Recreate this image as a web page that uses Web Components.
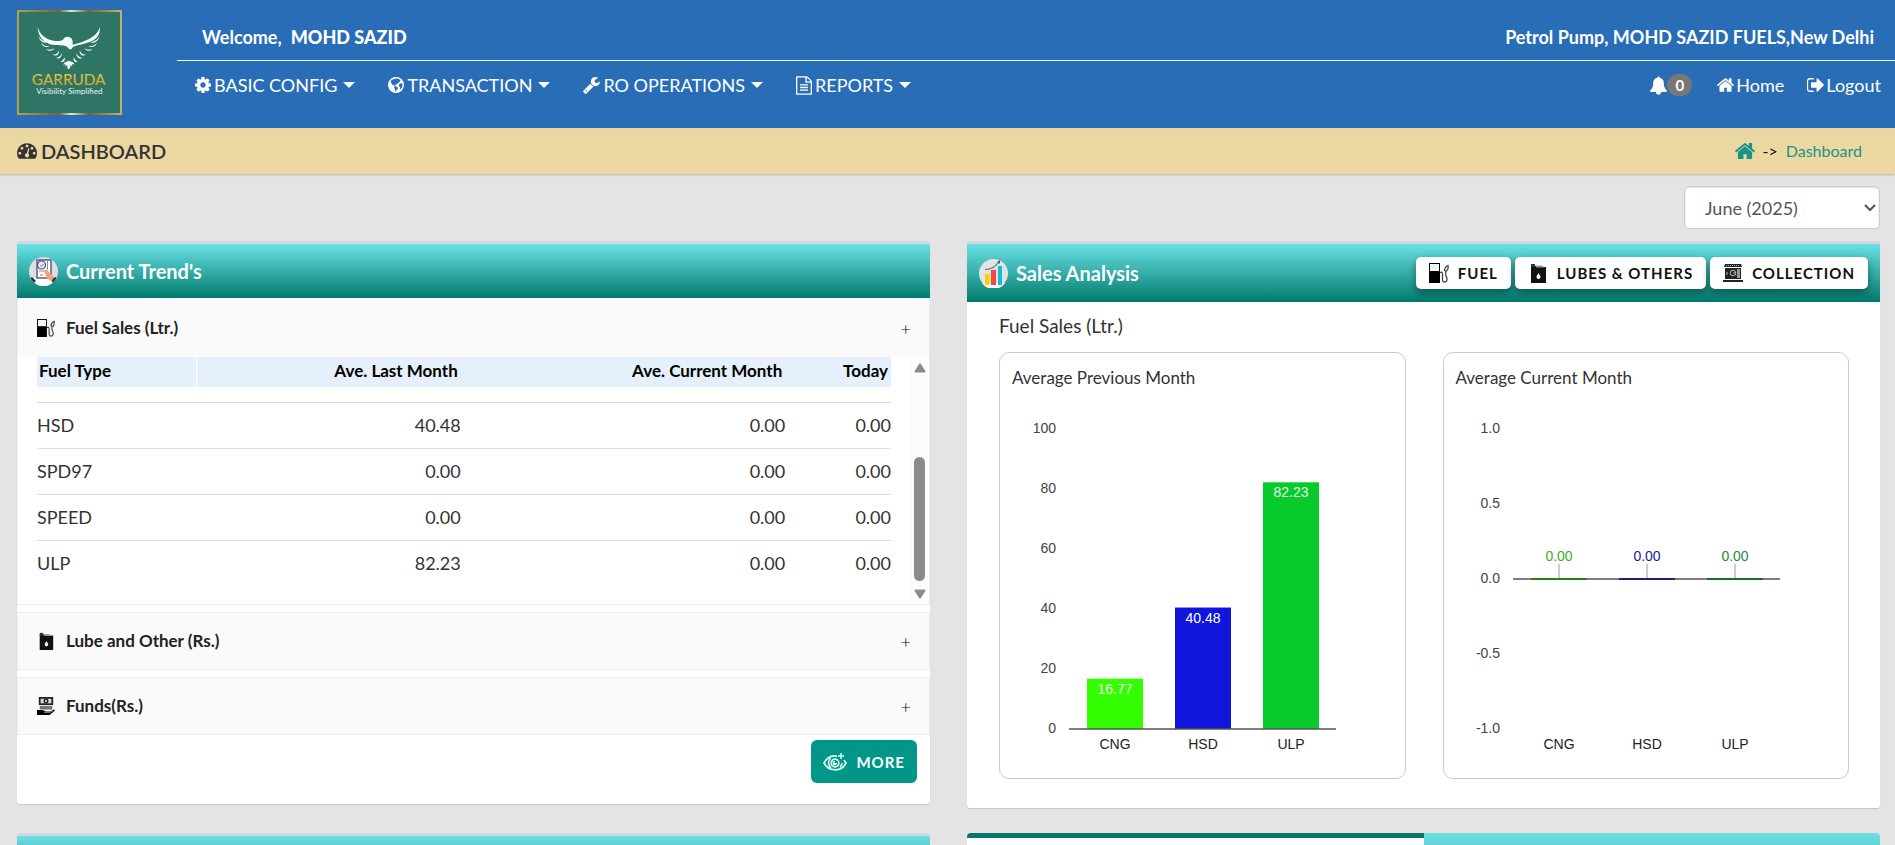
<!DOCTYPE html>
<html lang="en">
<head>
<meta charset="utf-8">
<title>Garruda Dashboard</title>
<style>
  body { margin: 0; height: 100vh; overflow: hidden; background: #e4e4e4; font-family: Lato, "Liberation Sans", sans-serif; font-size: 18px; line-height: 24px; color: #333; }
</style>
</head>
<body>
<garruda-app></garruda-app>
<script>
const define = (name, html, setup) => {
  const t = document.createElement('template');
  t.innerHTML = '<style>*{box-sizing:border-box}:host{display:block}button,select{font:inherit;color:inherit;margin:0}</style>' + html;
  customElements.define(name, class extends HTMLElement {
    connectedCallback() {
      if (this.shadowRoot) return;
      this.attachShadow({ mode: 'open' }).append(t.content.cloneNode(true));
      if (setup) setup.call(this, this.shadowRoot);
    }
  });
};

/* name: [viewBox, width, height, markup] */
const icons = {
  cog: ['128 128 1536 1536', 16, 16, '<path d="M1152 896q0-106-75-181t-181-75-181 75-75 181 75 181 181 75 181-75 75-181zm512-109v222q0 12-8 23t-20 13l-185 28q-19 54-39 91 35 50 107 138 10 12 10 25t-9 23q-27 37-99 108t-94 71q-12 0-26-9l-138-108q-44 23-91 38-16 136-29 186-7 28-36 28h-222q-14 0-24.5-8.5t-11.5-21.5l-28-184q-49-16-90-37l-141 107q-10 9-25 9-14 0-25-11-126-114-165-168-7-10-7-23 0-12 8-23 15-21 51-66.5t54-70.5q-27-50-41-99l-183-27q-13-2-21-12.5t-8-23.5v-222q0-12 8-23t19-13l186-28q14-46 39-92-40-57-107-138-10-12-10-24 0-10 9-23 26-36 98.5-107.5t94.5-71.5q13 0 26 10l138 107q44-23 91-38 16-136 29-186 7-28 36-28h222q14 0 24.5 8.5t11.5 21.5l28 184q49 16 90 37l142-107q9-9 24-9 13 0 25 10 129 119 165 170 7 8 7 22 0 12-8 23-15 21-51 66.5t-54 70.5q26 50 41 98l183 28q13 2 21 12.5t8 23.5z"/>'],
  globe: ['0 0 16 16', 16, 16, '<path fill-rule="evenodd" d="M8 0a8 8 0 1 0 0 16A8 8 0 0 0 8 0zM9.3 1.6l1.9.7 1.5 1.3-.9.3.2.9-1 .5-.6 1-1.5.4-.3 1.1-1-.4-1 .4.2.8 1-.1.3 1.1-1-.2-1.1-.9-1.3-.5-1.4-1.8-.6-1.9L4 2.6l.8.1.8-.7 1 .3.9-.8zM12.4 6.2l1.9.2.3 2-.8 2.4-1.4 1.8-.5-1.4.1-1.3-1.1-.6.1-1.700zM6.9 9.4l1.7.3 1.5 1.1-.6 1.5-1.2.9-.3 1.2-.9-.6-.2-1.7-.9-1.300z"/>'],
  wrench: ['64 128 1664 1664', 17, 17, '<path d="M448 1472q0-26-19-45t-45-19-45 19-19 45 19 45 45 19 45-19 19-45zm644-420l-682 682q-37 37-90 37-52 0-91-37l-106-108q-38-36-38-90 0-53 38-91l681-681q39 98 114.5 173.5t173.5 114.5zm634-435q0 39-23 106-47 134-164.5 217.5t-258.5 83.5q-185 0-316.5-131.5t-131.5-316.5 131.5-316.5 316.5-131.5q58 0 121.5 16.5t107.5 46.5q16 11 16 28t-16 28l-293 169v224l193 107q5-3 79-48.5t135.5-81 70.5-35.5q15 0 23.5 10t8.5 25z"/>'],
  file: ['128 0 1536 1792', 16, 19, '<path d="M1596 380q28 28 48 76t20 88v1152q0 40-28 68t-68 28h-1344q-40 0-68-28t-28-68v-1600q0-40 28-68t68-28h896q40 0 88 20t76 48zm-444-244v376h376q-10-29-22-41l-313-313q-12-12-41-22zm384 1528v-1024h-416q-40 0-68-28t-28-68v-416h-768v1536h1280zm-1024-864q0-14 9-23t23-9h704q14 0 23 9t9 23v64q0 14-9 23t-23 9h-704q-14 0-23-9t-9-23v-64zm736 224q14 0 23 9t9 23v64q0 14-9 23t-23 9h-704q-14 0-23-9t-9-23v-64q0-14 9-23t23-9h704zm0 256q14 0 23 9t9 23v64q0 14-9 23t-23 9h-704q-14 0-23-9t-9-23v-64q0-14 9-23t23-9h704z"/>'],
  bell: ['64 0 1664 1792', 17, 19, '<path d="M1728 1408q0 52-38 90t-90 38h-448q0 106-75 181t-181 75-181-75-75-181h-448q-52 0-90-38t-38-90q50-42 91-88t85-119.5 74.5-158.5 50-206 19.5-260q0-152 117-282.5t307-158.5q-8-19-8-39 0-40 28-68t68-28 68 28 28 68q0 20-8 39 190 28 307 158.5t117 282.5q0 139 19.5 260t50 206 74.5 158.5 85 119.5 91 88z"/>'],
  home: ['85 256 1622 1280', 17, 14, '<path d="M1472 992v480q0 26-19 45t-45 19h-384v-384h-256v384h-384q-26 0-45-19t-19-45v-480q0-1 .5-3t.5-3l575-474 575 474q1 2 1 6zm223-69l-62 74q-8 9-21 11h-3q-13 0-21-7l-692-577-692 577q-12 8-24 7-13-2-21-11l-62-74q-8-10-7-23.5t11-21.5l719-599q32-26 76-26t76 26l244 204v-195q0-14 9-23t23-9h192q14 0 23 9t9 23v408l219 182q10 8 11 21.5t-7 23.5z"/>'],
  out: ['96 256 1536 1280', 17, 14, '<path d="M704 1440q0 4 1 20t.5 26.5-3 23.5-10 19.5-20.5 6.5h-320q-119 0-203.5-84.5t-84.5-203.5v-704q0-119 84.5-203.5t203.5-84.5h320q13 0 22.5 9.5t9.5 22.5q0 4 1 20t.5 26.5-3 23.5-10 19.5-20.5 6.5h-320q-66 0-113 47t-47 113v704q0 66 47 113t113 47h312l11.5 1 11.5 3 8 5.5 7 9 2 13.5zm928-544q0 26-19 45l-544 544q-19 19-45 19t-45-19-19-45v-288h-448q-26 0-45-19t-19-45v-384q0-26 19-45t45-19h448v-288q0-26 19-45t45-19 45 19l544 544q19 19 19 45z"/>'],
  gauge: ['0 256 1792 1408', 20, 16, '<path d="M384 1152q0-53-37.5-90.5t-90.5-37.5-90.5 37.5-37.5 90.5 37.5 90.5 90.5 37.5 90.5-37.5 37.5-90.5zm192-448q0-53-37.5-90.5t-90.5-37.5-90.5 37.5-37.5 90.5 37.5 90.5 90.5 37.5 90.5-37.5 37.5-90.5zm428 481l101-382q6-26-7.5-48.5t-38.5-29.5-48 6.5-30 39.5l-101 382q-60 5-107 43.5t-63 98.5q-20 77 20 146t117 89 146-20 89-117q16-60-6-117t-72-91zm660-33q0-53-37.5-90.5t-90.5-37.5-90.5 37.5-37.5 90.5 37.5 90.5 90.5 37.5 90.5-37.5 37.5-90.5zm-640-640q0-53-37.5-90.5t-90.5-37.5-90.5 37.5-37.5 90.5 37.5 90.5 90.5 37.5 90.5-37.5 37.5-90.5zm448 192q0-53-37.5-90.5t-90.5-37.5-90.5 37.5-37.5 90.5 37.5 90.5 90.5 37.5 90.5-37.5 37.5-90.5zm320 448q0 261-141 483-19 29-54 29h-1402q-35 0-54-29-141-221-141-483 0-182 71-348t191-286 286-191 348-71 348 71 286 191 191 286 71 348z"/>'],
  caret: ['0 0 12 6', 12, 6, '<path d="M0 0h12L6 6z"/>'],
  chevron: ['0 0 12 8', 12, 8, '<path d="M1 1l5 5 5-5" fill="none" stroke="currentColor" stroke-width="2"/>'],
  pump: ['0 0 20 20', 20, 20, '<path fill="#000" d="M0 0h11v20H0z"/><path fill="#f4f4f4" d="M1 1h9v7H1z"/><path d="M11 9.500c3-1 2.500 1 2.500 4s-.5 5.500 2 5.500 3-2.500 2-5-1.500-3-.5-5.500c2-1 2.500-3 2-6-2 1-3.500 3-3.500 5l1.500 1" fill="none" stroke="#444" stroke-width="1.300"/>'],
  can: ['0 0 20 20', 20, 20, '<path fill="#111" d="M3 3h10l1.500 1H18v16H3z"/><path fill="#333" d="M3 1h4v3H3z"/><path d="M8 2.500h6l3 2H8z" fill="#999"/><path fill="#fff" d="M10.500 10c-1 2-2 2.500-2 4a2 2 0 0 0 4 0c0-1.500-1-2-2-4z"/>'],
  funds: ['0 0 20 20', 20, 20, '<path fill="#222" d="M2 0h16v9H2z"/><path fill="#ddd" d="M4 2h12v5H4z"/><circle cx="10" cy="4.500" r="2.800" fill="#222"/><circle cx="10" cy="4.500" r="1.200" fill="#ddd"/><path fill="#777" d="M3 10h14v4H3z"/><path fill="#000" d="M0 14.500h6l4 1.500h4l5-2 1 1-6 5H0z"/><path d="M8 17h6l4-2" stroke="#aaa" fill="none"/>'],
  machine: ['0 0 20 18', 20, 18, '<path fill="#222" d="M2 0h16l1 3H1zM2 4h16v11H2zM0 16h20v2H0z"/><path stroke="#ddd" stroke-width=".8" d="M3 1.500h14" stroke-dasharray="1 1"/><path fill="#999" d="M14 5h3v9h-3z"/><circle cx="10" cy="9" r="2.800" fill="none" stroke="#bbb"/><path d="M10 9h2.500M4 8v3" stroke="#bbb"/>'],
  eye: ['0 0 24 18', 24, 18, '<g fill="none" stroke="#d8fbf5" stroke-width="1.700"><path d="M14 3.200C8 2 3.500 5 1 10c4 8 17 10 22 0-.8-1.300-1.400-2-2.200-2.800M8 15c-3-3-3-7-.5-10M17 14c1-1 2-2 2-4"/><circle cx="12" cy="10" r="3.800"/></g><path fill="#d8fbf5" d="M14 10a2.200 2.200 0 1 1-2-2l-.3 2zM17.300 0h1.500v2.300H21v1.500h-2.200V6h-1.500V3.800H15V2.300h2.300z"/>'],
  trend: ['0 0 29 29', 29, 29, '<clipPath id="c"><circle cx="14.500" cy="14.500" r="14.500"/></clipPath><g clip-path="url(#c)"><path fill="#dedfe3" d="M0 0h29v29H0z"/><path fill="#fff" d="M0 21h29v8H0z"/><path fill="#fff" stroke="#59627e" stroke-width="1.500" d="M8 3h14v18H8z"/><circle cx="12.500" cy="8" r="4" fill="#e5e9f7" stroke="#3d5283" stroke-width="1.200"/><path d="M11 8l1.500 1.500 2.500-3M11 18h3" stroke="#d85d6d" fill="none"/><path d="M10 14h8M18.500 4v9" stroke="#8a93aa"/><path fill="#f6a26f" d="M15 14l3-1 8 8-3 4-5-4z"/><path fill="#152f5c" d="M23 23l3-3 3 2v6h-5zM3 20l4 4-3 3-4-5z"/></g>'],
  chart: ['0 0 29 29', 29, 29, '<circle cx="14.500" cy="14.500" r="14.500" fill="#e3e3e3"/><path fill="#fff" d="M3 24h23a14 14 0 0 1-23 0z"/><path fill="#ffce00" d="M6 15h4.500v11H6z"/><path fill="#f4483e" d="M12 11h5v15h-5z"/><path fill="#16bcd5" d="M19 7h4v19h-4z"/><path d="M6 10.500c6 0 11-3 14-8" fill="none" stroke="#3f7474" stroke-width="1.200"/><path fill="#3f7474" d="M18 3l3-2v4z"/>'],
  up: ['0 0 12 10', 12, 10, '<path fill="#8b8b8b" stroke="#8b8b8b" stroke-width="2" stroke-linejoin="round" d="M6 1.500l4.500 7h-9z"/>'],
  down: ['0 0 12 10', 12, 10, '<path fill="#8b8b8b" stroke="#8b8b8b" stroke-width="2" stroke-linejoin="round" d="M6 8.500l4.500-7h-9z"/>']
};
define('g-icon', '<style>:host{display:inline-block;flex:none}svg{display:block;fill:currentColor}</style>', function (r) {
  const [vb, w, h, body] = icons[this.getAttribute('name')];
  const k = this.hasAttribute('width') ? this.getAttribute('width') / w : 1;
  const d = document.createElement('div');
  d.innerHTML = `<svg aria-hidden="true" viewBox="${vb}" width="${Math.round(w * k)}" height="${Math.round(h * k)}">${body}</svg>`;
  r.append(d);
});

define('g-logo', `
<style>svg{display:block;width:105px;height:105px}</style>
<svg viewBox="0 0 315 315" role="img" aria-label="Garruda">
  <defs>
    <linearGradient id="b"><stop offset="0" stop-color="#b9a04c"/><stop offset=".4" stop-color="#7b6233"/><stop offset=".52" stop-color="#d8f0c4"/><stop offset=".68" stop-color="#7b6233"/><stop offset="1" stop-color="#c3b26a"/></linearGradient>
    <linearGradient id="t" x2="0" y2="1"><stop offset=".2" stop-color="#e6cf3d"/><stop offset="1" stop-color="#d39a2a"/></linearGradient>
  </defs>
  <path fill="url(#b)" d="M0 0h315v315H0z"/><path fill="#2f7566" d="M6 6h303v303H6z"/>
  <g fill="#f4fffb">
    <path d="M62 50c6 24 24 38 48 42 14 2 22 1 28-3 4-9 16-12 24-5 6 5 5 12 5 20 16-4 28-6 40-13 22-10 38-22 41-41 3 26-10 38-33 47-20 8-32 7-46 13-4 3-5 8-8 8-7 0-8-8-16-10-8-3-18-1-32-3-34-3-50-27-51-55z"/>
    <path d="M65 79c6 12 16 16 28 18-15 4-26-4-28-18zM72 98c8 9 17 12 28 10-11 7-24 2-28-10zM88 117c9 3 16 3 24-2-4 8-16 11-24 2zM247 79c-6 12-16 16-28 18 15 4 26-4 28-18zM240 98c-8 9-17 12-28 10 11 7 24 2 28-10zM226 117c-9 3-16 3-24-2 4 8 16 11 24 2z"/>
    <path d="M106 133c8 2 14-1 20-11 1 10-8 20-20 11zM118 143c8 0 12-4 17-13 0 11-8 20-17 13zM131 156c5-3 9-7 11-14 4 9-2 16-11 14zM208 133c-8 2-14-1-20-11-1 10 8 20 20 11zM195 143c-8 0-12-4-17-13 0 11 8 20 17 13zM182 156c-5-3-9-7-11-14-4 9 2 16 11 14z"/>
    <path d="M142 158l14-6 14 6 2 6-8-3 2 9-6-5-1 9-4 4-4-4v-10l-6 6 1-8-7 3z"/>
  </g>
  <text x="155" y="225" text-anchor="middle" font-family="Lato" font-size="46" fill="url(#t)">GARRUDA</text>
  <text x="157" y="251" text-anchor="middle" font-family="Lato" font-size="24" fill="#e8f6f0">Visibility Simplified</text>
</svg>`);

define('nav-item', `
<style>button{display:flex;align-items:center;border:0;background:none;padding:0;height:24px;color:#fff}slot{display:block}span{margin:0 6px 0 3px;white-space:nowrap}</style>
<button type="button"><span><slot></slot></span><g-icon name="caret"></g-icon></button>`, function (r) {
  const i = document.createElement('g-icon');
  i.setAttribute('name', this.getAttribute('icon'));
  r.querySelector('button').prepend(i);
});

define('app-header', `
<style>
  :host{background:#286db6;color:#fff}
  header{display:flex;height:128px;gap:55px;padding:10px 0 0 17px}
  .main{flex:1}
  .top{display:flex;justify-content:space-between;height:51px;padding:15px 21px 0 25px;border-bottom:1px solid #fff;font-weight:700}
  .top b{margin-left:9px}
  .bar{display:flex;align-items:center;justify-content:space-between;padding:12px 14px 0 18px}
  nav{display:flex;align-items:center;gap:33px}
  nav.r{gap:23px}
  a{display:flex;align-items:center;gap:2px;color:#fff;text-decoration:none}
  .n{display:grid;place-items:center;width:25px;height:22px;border-radius:11px;background:#777;font-size:15px;line-height:20px;font-weight:700}
  a.bell{gap:0;margin-right:2px}
</style>
<header><g-logo></g-logo>
  <div class="main">
    <div class="top"><span>Welcome,<b>MOHD SAZID</b></span><span>Petrol Pump, MOHD SAZID FUELS,New Delhi</span></div>
    <div class="bar">
      <nav aria-label="Main"><nav-item icon="cog">BASIC CONFIG</nav-item><nav-item icon="globe">TRANSACTION</nav-item><nav-item icon="wrench">RO OPERATIONS</nav-item><nav-item icon="file">REPORTS</nav-item></nav>
      <nav class="r" aria-label="Account"><a class="bell" href="#alerts"><g-icon name="bell"></g-icon><span class="n">0</span></a><a href="#home"><g-icon name="home"></g-icon>Home</a><a href="#logout"><g-icon name="out"></g-icon>Logout</a></nav>
    </div>
  </div>
</header>`);

define('title-bar', `
<style>
  :host{display:flex;justify-content:space-between;align-items:center;height:46px;padding:0 33px 0 17px;background:linear-gradient(#ead6a3,#eed9a3);box-shadow:0 1px 2px #0003}
  h1{display:flex;align-items:center;gap:4px;margin:0;font-size:20px;font-weight:600;color:#333}
  nav{display:flex;align-items:center;gap:8px;font-size:16px;color:#111}
  a{color:#159588;text-decoration:none} a g-icon{display:block}
</style>
<h1><g-icon name="gauge"></g-icon>DASHBOARD</h1>
<nav aria-label="Breadcrumb"><a href="#home" aria-label="Home"><g-icon name="home" width="20"></g-icon></a><span>-&gt;</span><a href="#dashboard">Dashboard</a></nav>`);

define('month-select', `
<style>
  :host{display:flex;justify-content:flex-end}
  label{display:grid;grid-template-columns:196px;align-items:center;color:#555}
  select{grid-area:1/1;height:43px;appearance:none;border:1px solid #ccc;border-radius:5px;background:#fff;padding:0 20px;box-shadow:inset 0 1px 2px #0002}
  g-icon{grid-area:1/1;justify-self:end;margin-right:4px;pointer-events:none}
</style>
<label><select aria-label="Month"><option>June (2025)</option></select><g-icon name="chevron"></g-icon></label>`);

define('panel-card', `
<style>
  :host{border-top:3px solid #d2d6de;border-radius:3px;background:#fff;box-shadow:0 1px 1px #0002}
  header{display:flex;align-items:center;justify-content:space-between;padding:0 12px;height:var(--head,54px);background:linear-gradient(#6be1e6,#007a6c)}
  h2{display:flex;align-items:center;gap:8px;margin:0;font-size:20px;font-weight:700;color:#fff}
  .a{display:flex;gap:4px}
</style>
<header><h2><slot name="title"></slot></h2><div class="a"><slot name="actions"></slot></div></header><slot></slot>`);

define('pill-button', `
<style>
  button{display:flex;align-items:center;gap:9px;height:32px;padding:0 13px;border:0;border-radius:5px;background:#fff;color:#111;font-size:15px;line-height:20px;font-weight:700;letter-spacing:1px;white-space:nowrap;box-shadow:0 4px 8px #0006}
</style><button type="button"><slot></slot></button>`);

define('accordion-item', `
<style>
  :host{border:1px solid #eee;background:#fff}
  h3{margin:0;font-size:18px}
  button{display:flex;align-items:center;width:100%;height:var(--h,56px);padding:0 18px 0 19px;border:0;background:#fafafa;text-align:left;font-size:17px;font-weight:700;color:#222;gap:11px}
  i{margin-left:auto;font-style:normal;font-size:18px;font-weight:300;color:#000}
</style>
<h3><button type="button"><slot name="icon"></slot><slot name="title"></slot><i>+</i></button></h3><slot></slot>`);

define('sales-table', `
<style>
  :host{display:flex;justify-content:space-between;height:247px;padding-left:19px}
  .t{flex:1;margin-right:19px}
  table{width:100%;table-layout:fixed;border-collapse:collapse}
  .c1{width:159px}.c2{width:31%}.c3{width:38%}
  th{height:30px;padding:0 3px 2px 2px;background:#e6effc;color:#000;font-size:17px;font-weight:700;text-align:right;white-space:nowrap}
  th:first-child{border-right:1px solid #fff}
  td{height:46px;padding:0;text-align:right;border-top:1px solid #ddd}
  th:first-child,td:first-child{text-align:left}
  tbody:before{content:"";display:table-row;height:15px}
  .s{display:flex;flex-direction:column;align-items:center;width:19px;padding:6px 0 5px;background:#fcfcfc}
  .thumb{width:11px;height:124px;margin:auto 0 8px;border-radius:6px;background:#8b8b8b}
</style>
<div class="t"><table><colgroup><col class="c1"><col class="c2"><col class="c3"><col></colgroup>
<thead><tr><th>Fuel Type</th><th>Ave. Last Month</th><th>Ave. Current Month</th><th>Today</th></tr></thead>
<tbody>
<tr><td>HSD</td><td>40.48</td><td>0.00</td><td>0.00</td></tr>
<tr><td>SPD97</td><td>0.00</td><td>0.00</td><td>0.00</td></tr>
<tr><td>SPEED</td><td>0.00</td><td>0.00</td><td>0.00</td></tr>
<tr><td>ULP</td><td>82.23</td><td>0.00</td><td>0.00</td></tr>
</tbody></table></div>
<div class="s"><g-icon name="up"></g-icon><div class="thumb"></div><g-icon name="down"></g-icon></div>`);

/* Bar chart: attributes min, max, step, digits and a JSON list of [label, value, fill, label colour]. */
define('bar-chart', `
<style>
  :host{border:1px solid #ccc;border-radius:10px;padding:13px 12px 23px}
  h4{margin:0;font-size:17px;line-height:24px;font-weight:400;color:#333}
  svg{display:block;width:100%;height:365px}
  text{font:14px Arial,"Liberation Sans",sans-serif;fill:#444}
</style><h4><slot></slot></h4>`, function (r) {
  const a = n => +this.getAttribute(n), min = a('min'), max = a('max');
  const y = v => 339 - (v - min) / (max - min) * 300;
  let s = '';
  for (let v = max; v >= min; v -= a('step'))
    s += `<text x="44" y="${y(v) + 4}" text-anchor="end">${v.toFixed(a('digits'))}</text>`;
  JSON.parse(this.getAttribute('data')).forEach(([l, v, fill, ink], i) => {
    const cx = 103 + i * 88;
    s += `<text x="${cx}" y="359" text-anchor="middle" style="fill:#222">${l}</text>`;
    if (v) s += `<rect x="${cx - 28}" y="${y(v)}" width="56" height="${y(0) - y(v)}" fill="${fill}"/><text x="${cx}" y="${y(v) + 15}" text-anchor="middle" style="fill:${ink}">${v.toFixed(2)}</text>`;
    else s += `<path d="M${cx} ${y(0)}v-15" stroke="#999"/><text x="${cx}" y="${y(0) - 18}" text-anchor="middle" style="fill:${ink}">0.00</text>`;
  });
  s += `<path d="M57 ${y(0)}h267" stroke="#555" stroke-width="1.500"/>`;
  JSON.parse(this.getAttribute('data')).forEach(([l, v, fill], i) => {
    if (!v) s += `<path d="M${75 + i * 88} ${y(0)}h56" stroke="${fill}" stroke-width="2"/>`;
  });
  const d = document.createElement('div');
  d.innerHTML = `<svg role="img">${s}</svg>`;
  r.append(d.firstChild);
});

define('more-button', `
<style>button{display:flex;align-items:center;gap:9px;height:43px;padding:0 12px;border:0;border-radius:6px;background:#009688;color:#fff;font-size:15px;font-weight:700;letter-spacing:1px}</style>
<button type="button"><g-icon name="eye"></g-icon><slot></slot></button>`);

define('garruda-app', `
<style>
  main{padding:12px 15px 0 17px}
  .grid{display:grid;grid-template-columns:1fr 1fr;column-gap:37px;row-gap:25px;align-items:start;margin-top:12px}
  .acc{display:grid;gap:7px}
  .foot{display:flex;justify-content:flex-end;padding:5px 13px 21px}
  .body{padding:12px 31px 29px 32px}
  .body p{margin:0 0 14px;font-size:19px}
  .charts{display:grid;grid-template-columns:1fr 1fr;gap:37px}
  .sales{--head:58px}
  .first{--h:59px;border-top:0}
  .tabs{display:flex;height:60px;border-radius:4px 4px 0 0;overflow:hidden;background:#fff}
  .tabs div{flex:1;border-top:5px solid #087567}
  .tabs div+div{border:0;background:linear-gradient(#6be1e6,#2fa09b)}
</style>
<app-header></app-header>
<title-bar></title-bar>
<main>
  <month-select></month-select>
  <div class="grid">
    <panel-card>
      <g-icon slot="title" name="trend"></g-icon><span slot="title">Current Trend's</span>
      <div class="acc">
        <accordion-item class="first"><g-icon slot="icon" name="pump" width="18"></g-icon><span slot="title">Fuel Sales (Ltr.)</span><sales-table></sales-table></accordion-item>
        <accordion-item><g-icon slot="icon" name="can" width="18"></g-icon><span slot="title">Lube and Other (Rs.)</span></accordion-item>
        <accordion-item><g-icon slot="icon" name="funds" width="18"></g-icon><span slot="title">Funds(Rs.)</span></accordion-item>
      </div>
      <div class="foot"><more-button>MORE</more-button></div>
    </panel-card>
    <panel-card class="sales">
      <g-icon slot="title" name="chart"></g-icon><span slot="title">Sales Analysis</span>
      <pill-button slot="actions"><g-icon name="pump"></g-icon>FUEL</pill-button>
      <pill-button slot="actions"><g-icon name="can"></g-icon>LUBES &amp; OTHERS</pill-button>
      <pill-button slot="actions"><g-icon name="machine"></g-icon>COLLECTION</pill-button>
      <div class="body">
        <p>Fuel Sales (Ltr.)</p>
        <div class="charts">
          <bar-chart min="0" max="100" step="20" digits="0" data='[["CNG",16.77,"#3f0","#eee"],["HSD",40.48,"#1116dc","#fff"],["ULP",82.23,"#06cb2b","#eee"]]'>Average Previous Month</bar-chart>
          <bar-chart min="-1" max="1" step="0.5" digits="1" data='[["CNG",0,"#2f7a14","#3fae1c"],["HSD",0,"#20207a","#1a1a96"],["ULP",0,"#1d6a32","#1c8a38"]]'>Average Current Month</bar-chart>
        </div>
      </div>
    </panel-card>
    <panel-card></panel-card>
    <div class="tabs"><div></div><div></div></div>
  </div>
</main>`);
</script>
</body>
</html>
